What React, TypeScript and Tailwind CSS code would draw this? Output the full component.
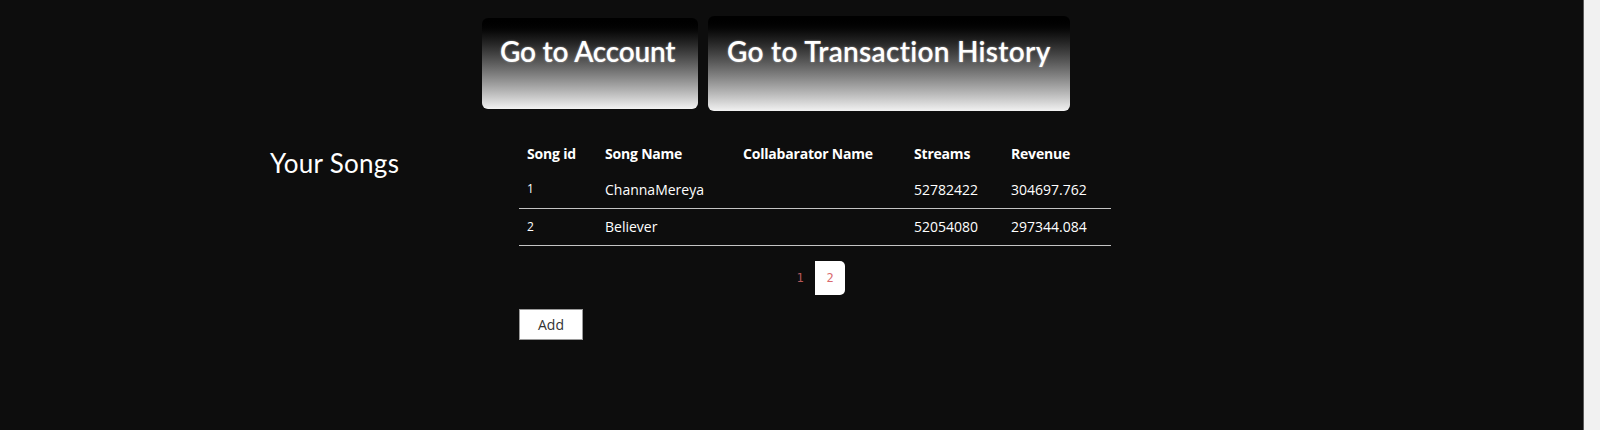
const songs = [
  { id: 1, name: 'ChannaMereya', collab: '', streams: '52782422', revenue: '304697.762' },
  { id: 2, name: 'Believer', collab: '', streams: '52054080', revenue: '297344.084' },
];

export default function App() {
  return (
    <div className="flex h-[430px] w-full bg-[#0d0d0d] overflow-hidden">
      <div className="flex-1">
        {/* Top buttons */}
        <div className="flex items-center gap-[10px] pl-[482px] pt-[16px]">
          <button className="flex h-[91px] w-[216px] flex-col items-start justify-start rounded-[6px] bg-gradient-to-b from-black to-[#f2f2f2] pl-[18px] pt-[16px]">
            <span className="block text-[28px] leading-[34px] text-white font-['Lato',sans-serif] font-semibold tracking-[-0.2px] [text-shadow:0_0_2px_rgba(255,255,255,0.5)]">
              Go to Account
            </span>
          </button>
          <button className="flex h-[95px] w-[362px] flex-col items-start justify-start rounded-[6px] bg-gradient-to-b from-black to-[#f2f2f2] pl-[19px] pt-[18px]">
            <span className="block text-[28px] leading-[34px] text-white font-['Lato',sans-serif] font-semibold tracking-[0.3px] [text-shadow:0_0_2px_rgba(255,255,255,0.5)]">
              Go to Transaction History
            </span>
          </button>
        </div>

        {/* Songs section */}
        <div className="flex mt-[24px]">
          <div className="w-[519px] pl-[270px] pt-[12px]">
            <h2 className="text-[26px] leading-[32px] text-white font-['Lato',sans-serif] tracking-[0.3px]">Your Songs</h2>
          </div>

          <div className="w-[592px]">
            <table className="w-[592px] table-fixed border-collapse text-white font-['Open_Sans',sans-serif]">
              <colgroup>
                <col className="w-[78px]" />
                <col className="w-[138px]" />
                <col className="w-[171px]" />
                <col className="w-[97px]" />
                <col className="w-[108px]" />
              </colgroup>
              <thead>
                <tr className="h-[36px] text-[14px] font-bold tracking-[-0.2px]">
                  <th className="pl-[8px] text-left">Song id</th>
                  <th className="pl-[8px] text-left">Song Name</th>
                  <th className="pl-[8px] text-left">Collabarator Name</th>
                  <th className="pl-[8px] text-left">Streams</th>
                  <th className="pl-[8px] text-left">Revenue</th>
                </tr>
              </thead>
              <tbody>
                {songs.map((s) => (
                  <tr key={s.id} className="h-[37px] border-b-[1.5px] border-[#c4c4c4] text-[14px]">
                    <td className="pl-[8px] text-[12px]">{s.id}</td>
                    <td className="pl-[8px]">{s.name}</td>
                    <td className="pl-[8px]">{s.collab}</td>
                    <td className="pl-[8px]">{s.streams}</td>
                    <td className="pl-[8px]">{s.revenue}</td>
                  </tr>
                ))}
              </tbody>
            </table>

            {/* Pagination */}
            <div className="mt-[15px] flex justify-center font-['DejaVu_Sans_Mono',monospace] text-[12px]">
              <span className="flex h-[34px] w-[30px] items-center justify-center text-[#b5585a]">1</span>
              <span className="flex h-[34px] w-[30px] items-center justify-center rounded-r-[5px] bg-white text-[#d9696d]">2</span>
            </div>

            <button className="mt-[14px] h-[31px] w-[64px] border border-[#9a9a9a] bg-white text-[14px] text-[#333] font-['Open_Sans',sans-serif]">
              Add
            </button>
          </div>
        </div>
      </div>

      {/* scrollbar track */}
      <div className="w-[17px] border-l border-[#5a5a5a] bg-[#f1f1f1]" />
    </div>
  );
}
